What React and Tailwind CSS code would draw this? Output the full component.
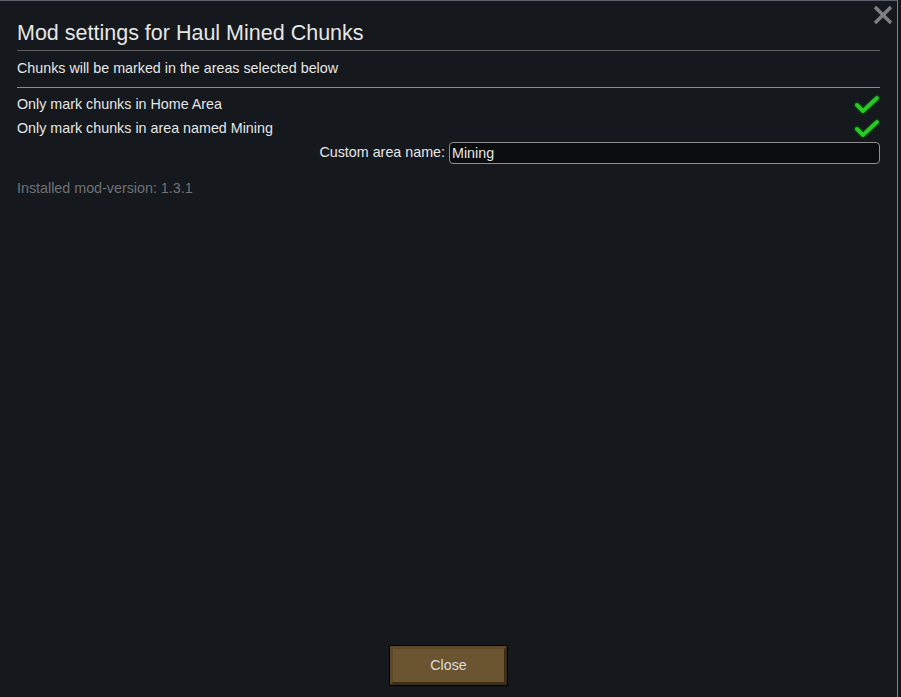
import React from 'react';

function Check() {
  return (
    <svg width="26" height="22" viewBox="0 0 26 22" className="block">
      <polyline points="3,11 9,17 23,4" fill="none" stroke="#0b3a0b" strokeWidth="7" strokeLinecap="round" strokeLinejoin="round" />
      <polyline points="3,11 9,17 23,4" fill="none" stroke="#27c927" strokeWidth="4" strokeLinecap="round" strokeLinejoin="round" />
    </svg>
  );
}

export default function App() {
  return (
    <div className="w-[901px] h-[697px] bg-[#15181c] flex font-['Liberation_Sans',Arial,sans-serif] text-[#e6e6e6] overflow-hidden">
      <div className="relative w-[898px] h-full bg-[#15191d] border-t border-t-[#59606a] border-r border-r-[#7b8694] flex flex-col px-[17px]">
        {/* close X */}
        <svg width="20" height="20" viewBox="0 0 20 20" className="absolute right-[4px] top-[4px]">
          <path d="M2 2 L18 18 M18 2 L2 18" stroke="#7d7f80" strokeWidth="3.5" />
        </svg>

        <div className="pt-[20px] pb-[4px] border-b border-[#5c5c5c] text-[21.5px] leading-[25px]">
          Mod settings for Haul Mined Chunks
        </div>
        <div className="h-[37px] border-b border-[#8a8a8a] text-[14.3px] leading-[16px] pt-[9px]">
          Chunks will be marked in the areas selected below
        </div>

        <div className="flex items-center justify-between h-[24px] mt-[5px] text-[14.3px]">
          <span>Only mark chunks in Home Area</span>
          <Check />
        </div>
        <div className="flex items-center justify-between h-[24px] text-[14.3px]">
          <span>Only mark chunks in area named Mining</span>
          <Check />
        </div>
        <div className="flex items-center h-[22px] mt-[1px] text-[14.3px]">
          <span className="w-[432px] text-right pr-[4px]">Custom area name:</span>
          <div className="flex-1 h-[22px] rounded-[4px] border border-[#8e8e8e] bg-[#0b0c0e] pl-[2px] leading-[20px]">
            Mining
          </div>
        </div>

        <div className="mt-[14px] text-[14.3px] text-[#6f7174]">Installed mod-version: 1.3.1</div>

        <div className="flex-1" />

        <div className="flex justify-center pb-[11px]">
          <div className="w-[119px] h-[41px] border border-black bg-[#6b5430] flex">
            <div className="flex-1 flex items-center justify-center border-[3px] border-t-[#5e4a28] border-l-[#5e4a28] border-b-[#3b2d16] border-r-[#3b2d16] text-[14.3px] text-[#dcdcdc]">
              Close
            </div>
          </div>
        </div>
      </div>
    </div>
  );
}
